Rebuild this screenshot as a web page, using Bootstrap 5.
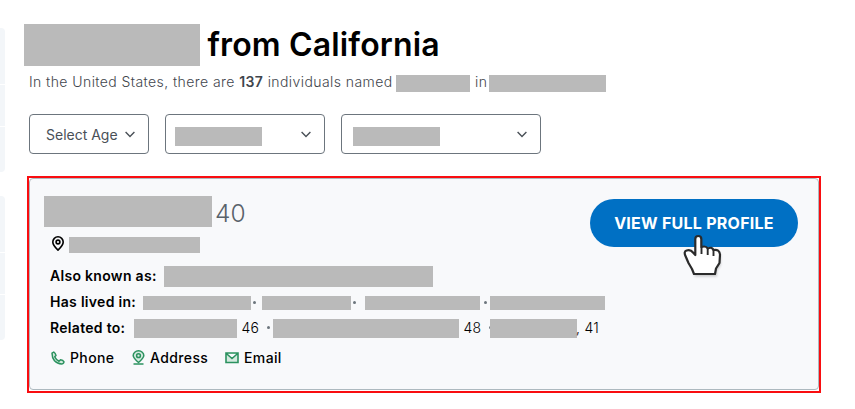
<!DOCTYPE html>
<html lang="en">
<head>
<meta charset="utf-8">
<meta name="viewport" content="width=device-width, initial-scale=1">
<title>People search results</title>
<link href="https://cdn.jsdelivr.net/npm/bootstrap@5.3.0/dist/css/bootstrap.min.css" rel="stylesheet">
<style>
body{font-family:Inter,"Liberation Sans",sans-serif;font-size:14px;color:#000;background:#fff;height:409px;overflow:hidden}
svg{display:block;flex:none}
.rail{width:5px;padding-top:28px;flex:none}
.rail-box{height:144px;background:#f3f6f9;border-radius:0 4px 4px 0;margin-bottom:24px;padding-top:56px}
.rail-box i{display:block;height:1px;background:#fff;margin-bottom:41px}
.results{padding:24px 0 0 19px;width:816px;flex:none}
.mask{background:#bababa;flex:none;display:block}
.t{white-space:nowrap;flex:none;display:block}
.title{font-size:32px;line-height:42px;font-weight:600;height:42px;letter-spacing:.15px}
.intro{margin:9px 0 0 5px;height:17px;line-height:14px;color:#3f464d;font-weight:300;letter-spacing:.42px}
.intro b{font-weight:600}
.filters{margin:22px 0 0 5px;gap:16px}
.pick{height:40px;border:1px solid #6c757d;border-radius:4px;background:#fff;color:#495057;padding:0 13px 0 16px;font-weight:400;font-size:14px;letter-spacing:0}
.frame{margin:22px 0 0 3px;width:794px;height:217px;border:2px solid #f90d10;padding-bottom:1px}
.person{height:100%;background:#f8f9fb;border:1px solid #adb9bf;border-radius:4px;padding:17px 20px 0 14px}
.facts{width:540px;flex:none}
.age{font-size:24.500px;line-height:35px;font-weight:300;color:#59626a;letter-spacing:0}
.row-line{margin-left:6px}
.lbl{font-weight:600;letter-spacing:.3px}
.up{padding-bottom:2px}
.num{font-weight:300;letter-spacing:.1px}
.dot{width:3px;height:3px;border-radius:50%;background:#6c757d;flex:none}
.tag{font-weight:500;letter-spacing:.38px;padding-bottom:2px}
.view{width:208px;height:48px;border-radius:24px;background:#0070c4;color:#fff;font-size:16px;font-weight:700;padding:0;line-height:48px;border:0;letter-spacing:.25px}
.hand{position:absolute;left:92px;top:34px}
</style>
</head>
<body>
<div class="d-flex">
  <aside class="rail">
    <div class="rail-box"><i></i><i></i></div>
    <div class="rail-box"><i></i><i></i></div>
  </aside>
  <main class="results">
    <h1 class="title d-flex m-0"><span class="mask" style="width:176px"></span><span class="t" style="padding-left:7.500px">from California</span></h1>
    <div class="intro d-flex">
      <span class="t" style="width:367px">In the United States, there are <b>137</b> individuals named</span>
      <span class="mask" style="width:74px"></span>
      <span class="t" style="width:19px;padding-left:5px">in</span>
      <span class="mask" style="width:117px"></span>
    </div>
    <div class="filters d-flex">
      <button class="pick d-flex align-items-center justify-content-between" style="width:120px"><span class="t">Select Age</span>
        <svg width="10" height="7" viewBox="0 0 10 7" fill="none" stroke="#495057" stroke-width="1.4"><path d="M.6 1 5 5.4 9.4 1"/></svg></button>
      <button class="pick d-flex align-items-center justify-content-between" style="width:160px;padding-left:9px"><span class="mask" style="width:87px;height:19px;margin-top:5px"></span>
        <svg width="10" height="7" viewBox="0 0 10 7" fill="none" stroke="#495057" stroke-width="1.4"><path d="M.6 1 5 5.4 9.4 1"/></svg></button>
      <button class="pick d-flex align-items-center justify-content-between" style="width:200px;padding-left:11px"><span class="mask" style="width:87px;height:19px;margin-top:5px"></span>
        <svg width="10" height="7" viewBox="0 0 10 7" fill="none" stroke="#495057" stroke-width="1.4"><path d="M.6 1 5 5.4 9.4 1"/></svg></button>
    </div>
    <section class="frame">
      <div class="person d-flex justify-content-between align-items-start">
        <div class="facts">
          <div class="d-flex" style="height:31px"><span class="mask" style="width:168px"></span><span class="t age" style="margin-left:3px">40</span></div>
          <div class="row-line d-flex" style="margin-top:9px;height:17px">
            <svg style="margin-left:2px" width="12" height="15" viewBox="0 0 12 15" fill="none" stroke="#000" stroke-width="1.6"><path d="M6 14.100C3.600 11.900.8 9.200.8 6a5.200 5.200 0 0 1 10.400 0c0 3.200-2.800 5.900-5.200 8.100Z"/><circle cx="6" cy="6" r="1.900"/></svg>
            <span class="mask" style="width:131px;height:16px;margin:1px 0 0 5px"></span>
          </div>
          <div class="row-line d-flex align-items-center" style="margin-top:13px;height:21px"><span class="t lbl up" style="width:114px">Also known as:</span><span class="mask" style="width:269px;height:21px"></span></div>
          <div class="row-line d-flex align-items-center" style="margin-top:9px;height:14px">
            <span class="t lbl" style="width:93px;padding-bottom:3px">Has lived in:</span><span class="mask" style="width:108px;height:14px"></span>
            <i class="dot" style="margin:0 5px 2px 2px"></i><span class="mask" style="width:89px;height:14px;margin-left:1px"></span>
            <i class="dot" style="margin:0 9px 2px 2px"></i><span class="mask" style="width:115px;height:14px"></span>
            <i class="dot" style="margin:0 3px 2px 4px"></i><span class="mask" style="width:115px;height:14px"></span>
          </div>
          <div class="row-line d-flex align-items-center" style="margin-top:9px;height:19px">
            <span class="t lbl up" style="width:84px">Related to:</span><span class="mask" style="width:103px;height:19px"></span>
            <span class="t num up" style="width:30px;padding-left:4.500px">46</span><i class="dot" style="margin:0 3px 2px 0"></i><span class="mask" style="width:186px;height:19px"></span>
            <span class="t num up" style="width:30px;padding-left:4.500px">48</span><i class="dot" style="margin:0 -2px 2px 0"></i><span class="mask" style="width:87px;height:19px"></span>
            <span class="t num up" style="margin-left:-1px;letter-spacing:.3px">, 41</span>
          </div>
          <div class="row-line d-flex align-items-center" style="margin-top:10px;height:20px">
            <svg style="margin-left:1px" width="14" height="14" viewBox="0 0 14 14" fill="#d5eadf" stroke="#2b925f" stroke-width="1.500" stroke-linejoin="round"><path d="M1 2.200 2.800 1Q4.300 2 5 4.400L3.700 5.800Q5 8.800 8 10.200L9.500 8.700Q12 9 13 10.800 12.500 13 10.500 13 6.500 13 3.500 9.800 1 6.500 1 2.200Z"/></svg>
            <span class="t tag" style="width:67px;padding-left:5px">Phone</span>
            <svg style="margin-bottom:1px" width="13" height="15" viewBox="0 0 13 15" fill="none" stroke="#2b925f" stroke-width="1.500"><path fill="#d5eadf" d="M6.500 12.500C4 10.200 1.200 8.200 1.200 5.600a5.300 4.800 0 0 1 10.600 0c0 2.600-2.800 4.600-5.300 6.900Z"/><circle cx="6.500" cy="5.700" r="1.900"/><path d="M1.500 14h10"/></svg>
            <span class="t tag" style="width:80px;padding-left:5px">Address</span>
            <svg width="14" height="12" viewBox="0 0 14 12" fill="none" stroke="#2b925f" stroke-width="1.600"><path fill="#d5eadf" d="M1 1h12v9.500H1ZM1.300 1.500 7 6.500l5.700-5"/></svg>
            <span class="t tag" style="padding-left:5px">Email</span>
          </div>
        </div>
        <div class="position-relative" style="margin-top:3px">
          <button class="btn view">VIEW FULL PROFILE</button>
          <svg class="hand" width="46" height="48" viewBox="0 0 46 48"><path d="M13.300 6Q13.300 3 16.300 3T19.300 6V14Q24 12.500 25.700 15.500 30 13.500 31.500 17 37.500 16 38 21.500L37.500 30 34 35.500V41H11.500V37L8 31 3.500 23Q1.500 18.500 4.500 17.500 8.500 16 11 19.500L13.300 22Z" fill="#555" opacity=".3" transform="translate(1 2.500)" style="filter:blur(1.200px)"/><path d="M13.300 6Q13.300 3 16.300 3T19.300 6V14Q24 12.500 25.700 15.500 30 13.500 31.500 17 37.500 16 38 21.500L37.500 30 34 35.500 33 41H12L10 36 6.500 30 3.500 23Q1.500 18.500 4.500 17.500 8.500 16 11 19.500L13.300 22Z" fill="#fff" stroke="#2b2b2b" stroke-width="2.200" stroke-linejoin="round"/><path d="M19.500 14v7M25.700 15.500v6.500M31.500 17v6" stroke="#2b2b2b" stroke-width="1.900"/></svg>
        </div>
      </div>
    </section>
  </main>
</div>
<script src="https://cdn.jsdelivr.net/npm/bootstrap@5.3.0/dist/js/bootstrap.bundle.min.js"></script>
</body>
</html>
